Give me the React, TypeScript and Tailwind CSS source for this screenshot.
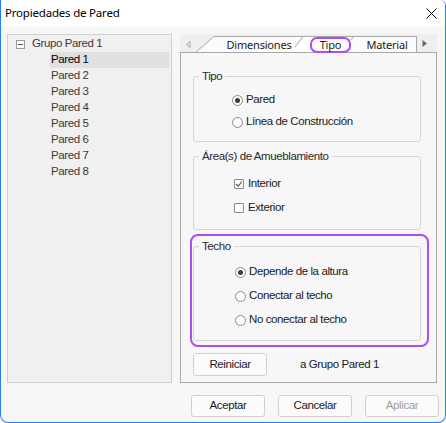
import React from "react";

const NARROW = "font-['Liberation_Sans_Narrow','Liberation_Sans',Arial,sans-serif]";

function Radio({ checked, label, pl }: { checked?: boolean; label: string; pl: string }) {
  return (
    <div className={`flex items-center h-[24px] ${pl}`}>
      <span className="w-[11px] h-[11px] rounded-full border border-[#8a8a8a] bg-[#fdfdfd] flex items-center justify-center shrink-0">
        {checked && <span className="w-[5px] h-[5px] rounded-full bg-[#3c3c3c]" />}
      </span>
      <span className="ml-[3px] text-[#1a1a1a]">{label}</span>
    </div>
  );
}

function Check({ checked, label }: { checked?: boolean; label: string }) {
  return (
    <div className="flex items-center h-[24px] pl-[40px]">
      <span className="w-[10px] h-[10px] border border-[#8a8a8a] bg-[#fdfdfd] flex items-center justify-center shrink-0 rounded-[1px]">
        {checked && (
          <svg width="8" height="8" viewBox="0 0 8 8">
            <path d="M1 4 L3.2 6.2 L7 1.5" stroke="#555" strokeWidth="1.1" fill="none" />
          </svg>
        )}
      </span>
      <span className="ml-[4px] text-[#1a1a1a]">{label}</span>
    </div>
  );
}

function Btn({ label, disabled }: { label: string; disabled?: boolean }) {
  return (
    <div
      className={`w-[74px] h-[22px] rounded-[3px] border border-[#d0d0d0] bg-[#fbfbfb] flex items-center justify-center ${
        disabled ? "text-[#a0a0a0]" : "text-[#1a1a1a]"
      }`}
    >
      {label}
    </div>
  );
}

export default function App() {
  const items = ["Pared 1", "Pared 2", "Pared 3", "Pared 4", "Pared 5", "Pared 6", "Pared 7", "Pared 8"];
  return (
    <div className={`w-[446px] h-[423px] bg-[#f7f7f7] border-x border-b border-[#2a7cf2] rounded-b-[8px] rounded-tr-[6px] flex flex-col overflow-hidden text-[11.5px] tracking-[-0.4px] ${NARROW}`}>
      {/* title bar */}
      <div className="h-[26px] bg-white flex items-center justify-between pl-[4px] pr-[8px] shrink-0">
        <span className="font-['Noto_Sans',sans-serif] text-[11.5px] tracking-[-0.2px] text-black">Propiedades de Pared</span>
        <svg width="11" height="11" viewBox="0 0 11 11">
          <path d="M0.5 0.5 L10.5 10.5 M10.5 0.5 L0.5 10.5" stroke="#000" strokeWidth="1" />
        </svg>
      </div>
      <div className="flex-1 flex flex-col">
        <div className="flex pl-[6px] pt-[8px] gap-[8px]">
          {/* tree */}
          <div className="w-[165px] h-[349px] border border-[#cfcfcf] bg-[#f0f0f0] pt-[1px]">
            <div className="h-[16px] flex items-center pl-[8px] text-[#3a3a3a]">
              <span className="w-[9px] h-[9px] border border-[#9a9a9a] bg-white flex items-center justify-center">
                <span className="w-[5px] h-[1px] bg-[#444]" />
              </span>
              <span className="ml-[7px]">Grupo Pared 1</span>
            </div>
            {items.map((it, i) => (
              <div key={it} className="h-[16px] flex items-center pl-[42px] pr-[2px]">
                <div className={`w-full h-[16px] flex items-center pl-[1px] ${i === 0 ? "bg-[#e0e0e0] text-black" : "text-[#3a3a3a]"}`}>
                  {it}
                </div>
              </div>
            ))}
          </div>
          {/* right column */}
          <div className="w-[257px] flex flex-col">
            {/* tab strip */}
            <div className="relative h-[18px] bg-[#efefef] flex items-end pl-[40px] font-['Noto_Sans',sans-serif] text-[11px] tracking-[-0.2px] text-[#1a1a1a]">
              <svg className="absolute inset-0" width="257" height="18" viewBox="0 0 257 18">
                <polygon points="16,18 34,2 123,2 111,18" fill="#fcfcfc" />
                <polygon points="111,18 123,2 174,2 166,18" fill="#ffffff" />
                <polygon points="166,18 174,2 236.5,2 236.5,18" fill="#fcfcfc" />
                <path d="M16 18 L34 2.5 L123 2.5" stroke="#a8a8a8" fill="none" />
                <path d="M114.5 13.5 L123 2.5 L174 2.5" stroke="#a8a8a8" fill="none" />
                <path d="M170 6.5 L174 2.5 L236.5 2.5 L236.5 18" stroke="#a8a8a8" fill="none" />
                <path d="M10 7.5 L6.5 10.5 L10 13.5 Z" stroke="#a0a0a0" fill="none" strokeWidth="0.9" />
                <path d="M242.5 6 L247 9.5 L242.5 13 Z" fill="#6a6a6a" />
              </svg>
              <span className="relative top-[1px] w-[78px] h-[16px] leading-[16px] text-center">Dimensiones</span>
              <span className="relative top-[1px] ml-[12px] w-[41px] h-[16px] leading-[12px] rounded-[7px] border-2 border-[#a94ef5] text-center">
                Tipo
              </span>
              <span className="relative top-[1px] ml-[9px] w-[54px] h-[16px] leading-[16px] text-center">Material</span>
            </div>
            {/* panel */}
            <div className="h-[331px] border border-[#a8a8a8] bg-[#f7f7f7] pt-[16px] pl-[12px] pr-[15px]">
              <fieldset className="h-[73px] border border-[#d6d6d6] rounded-[3px]">
                <legend className="ml-[5px] px-[3px] leading-[14px] text-[#2a2a2a]">Tipo</legend>
                <div className="pt-[6px] flex flex-col">
                  <div className="h-[22px] flex items-center pl-[38px]">
                    <Radio checked label="Pared" pl="" />
                  </div>
                  <div className="h-[22px] flex items-center pl-[38px]">
                    <Radio label="Línea de Construcción" pl="" />
                  </div>
                </div>
              </fieldset>
              <fieldset className="mt-[7px] h-[81px] border border-[#d6d6d6] rounded-[3px]">
                <legend className="ml-[5px] px-[3px] leading-[14px] text-[#2a2a2a]">Área(s) de Amueblamiento</legend>
                <div className="pt-[9px] flex flex-col">
                  <Check checked label="Interior" />
                  <Check label="Exterior" />
                </div>
              </fieldset>
              <div className="relative mt-[9px]">
                <fieldset className="h-[102px] border border-[#d6d6d6] rounded-[3px]">
                  <legend className="ml-[5px] px-[3px] leading-[14px] text-[#2a2a2a]">Techo</legend>
                  <div className="pt-[7px] flex flex-col">
                    <Radio checked label="Depende de la altura" pl="pl-[41px]" />
                    <Radio label="Conectar al techo" pl="pl-[41px]" />
                    <Radio label="No conectar al techo" pl="pl-[41px]" />
                  </div>
                </fieldset>
                <div className="absolute left-[-3px] right-[-8px] top-[-5px] bottom-[-6px] border-2 border-[#a94ef5] rounded-[8px] pointer-events-none" />
              </div>
              <div className="mt-[12px] flex items-center">
                <div className="w-[74px] h-[23px] rounded-[3px] border border-[#d0d0d0] bg-[#fbfbfb] flex items-center justify-center text-[#1a1a1a]">
                  Reiniciar
                </div>
                <span className="ml-[33px] text-[#1a1a1a]">a Grupo Pared 1</span>
              </div>
            </div>
          </div>
        </div>
        <div className="flex justify-end gap-[13px] pr-[6px] mt-[12px]">
          <Btn label="Aceptar" />
          <Btn label="Cancelar" />
          <Btn label="Aplicar" disabled />
        </div>
      </div>
    </div>
  );
}
